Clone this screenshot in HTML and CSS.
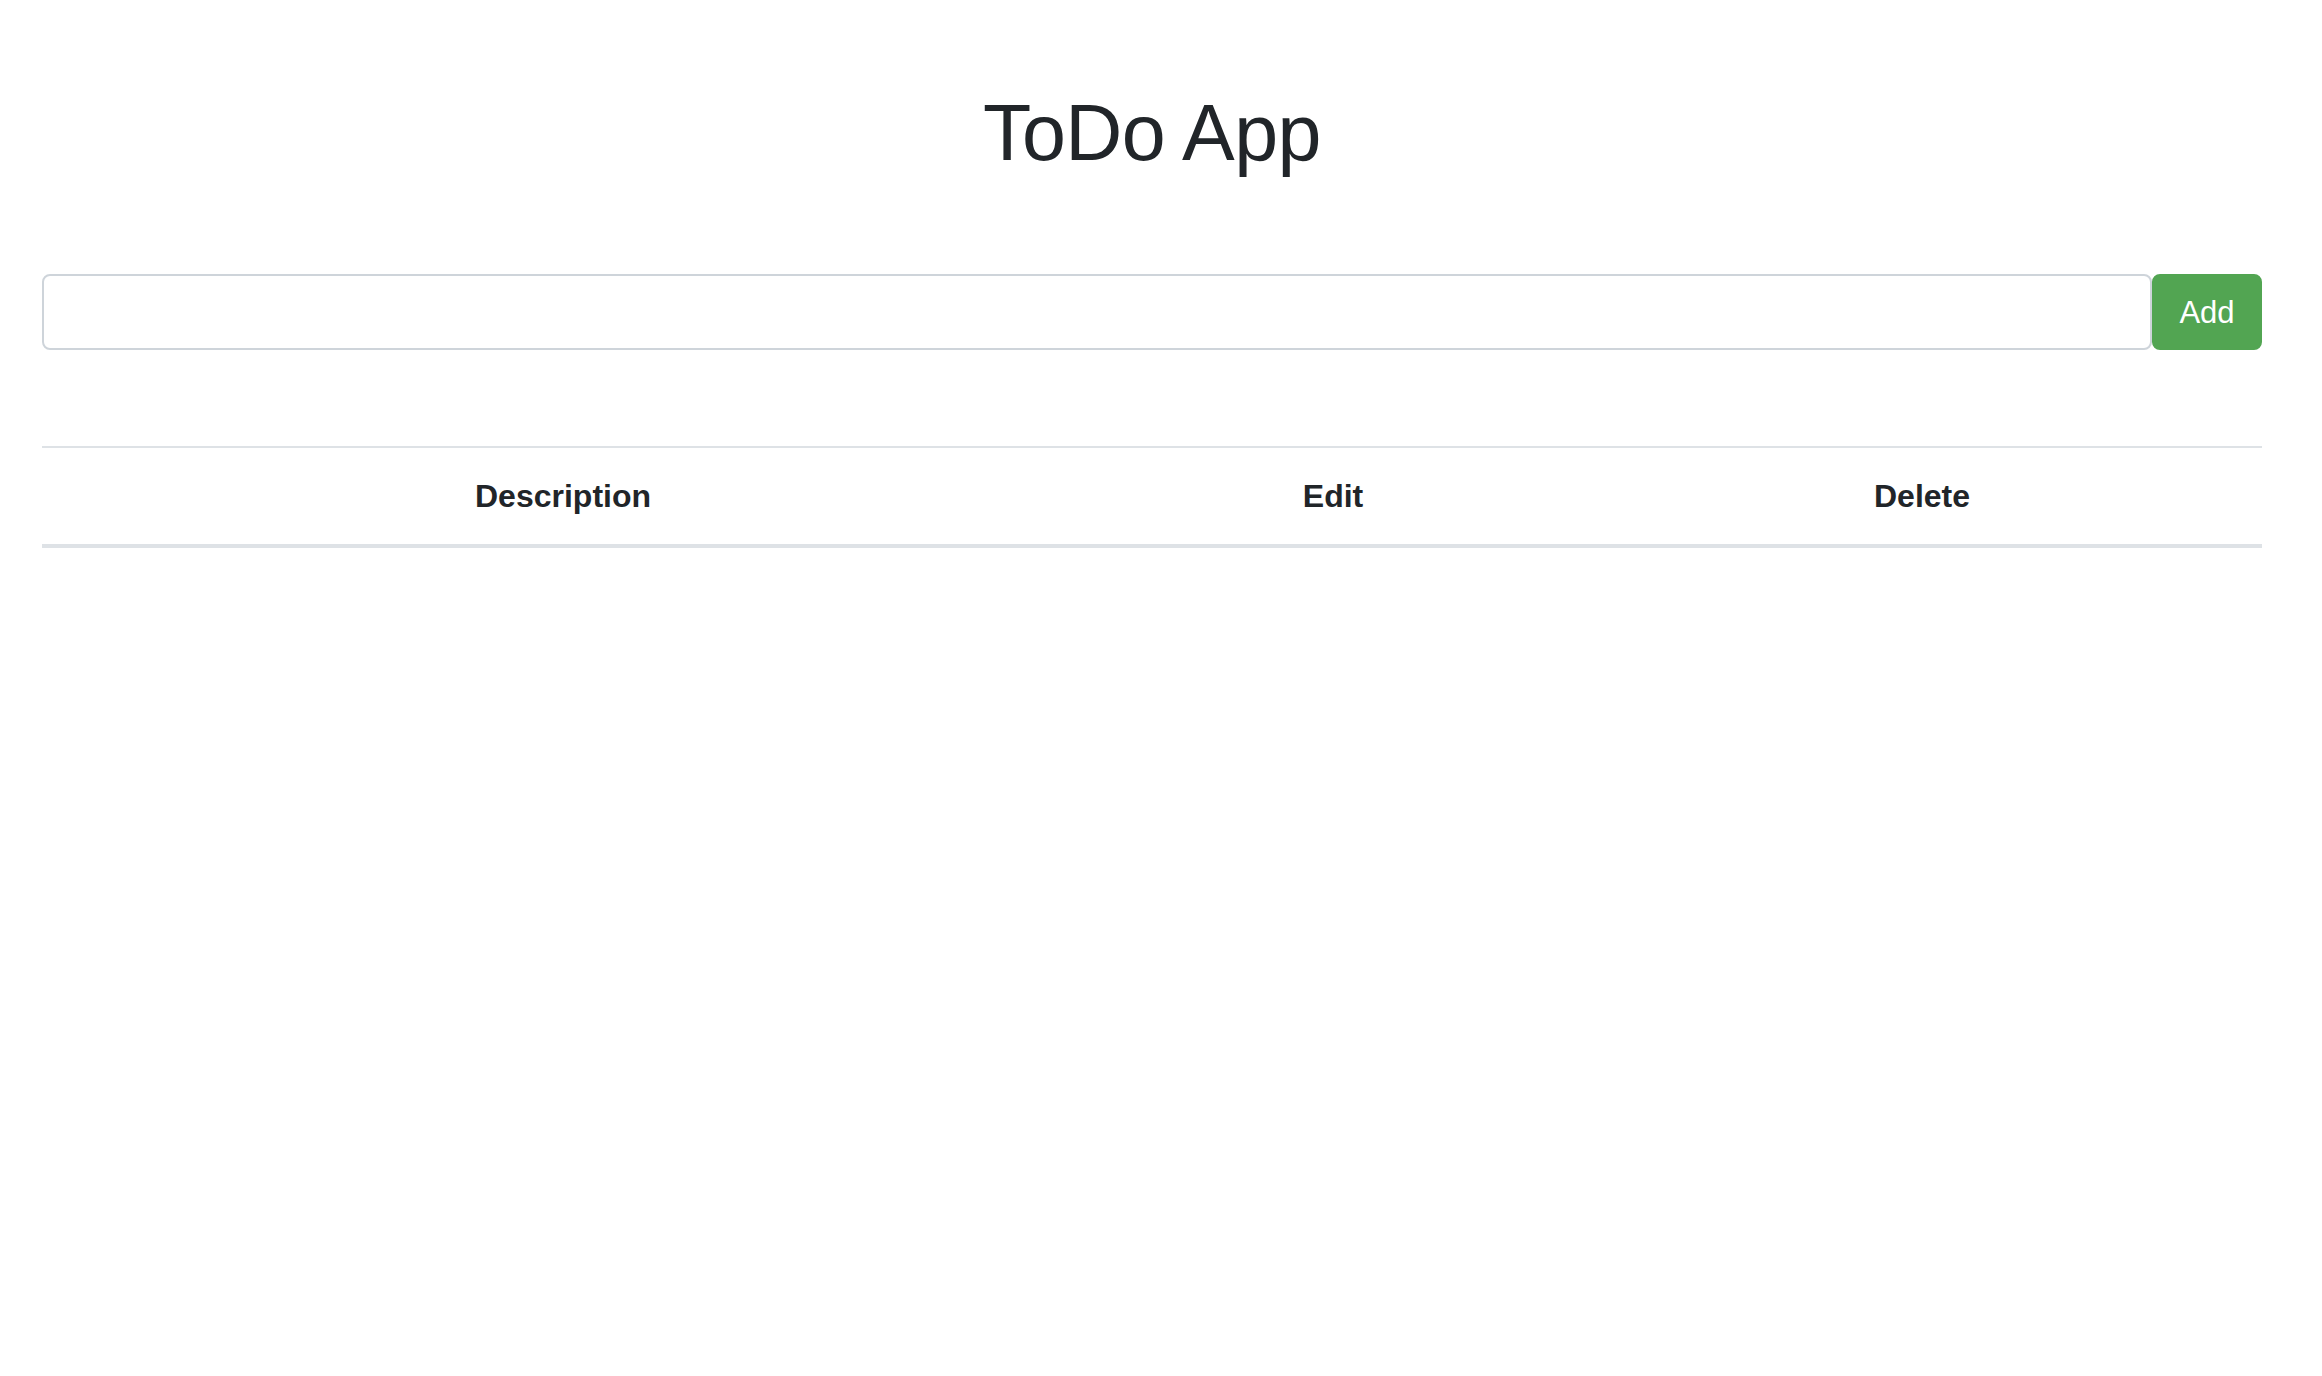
FILE: index.html
```html
<!DOCTYPE html>
<html lang="en">
<head>
<meta charset="utf-8">
<title>ToDo App</title>
<link rel="stylesheet" href="styles.css">
</head>
<body>
<div class="container">
  <h1 class="title">ToDo App</h1>
  <form class="add-form">
    <input class="add-input" type="text">
    <button class="add-btn" type="button">Add</button>
  </form>
  <table class="todo-table">
    <colgroup>
      <col class="col-desc">
      <col class="col-edit">
      <col class="col-del">
    </colgroup>
    <thead>
      <tr>
        <th>Description</th>
        <th>Edit</th>
        <th>Delete</th>
      </tr>
    </thead>
    <tbody></tbody>
  </table>
</div>
</body>
</html>
```
FILE: styles.css
```css
html, body {
  margin: 0;
  padding: 0;
  background: #ffffff;
}
body {
  font-family: "Liberation Sans", Arial, sans-serif;
  color: #212529;
  font-size: 32px;
  line-height: 48px;
}
.container {
  padding: 0 60px 0 42px;
}
.title {
  margin: 0;
  padding-top: 85px;
  font-size: 79px;
  line-height: 96px;
  font-weight: 400;
  text-align: center;
  letter-spacing: -0.6px;
  color: #212529;
}
.add-form {
  display: flex;
  margin: 93px 0 0 0;
}
.add-input {
  flex: 1;
  box-sizing: border-box;
  height: 76px;
  border: 2px solid #ced4da;
  border-radius: 8px;
  padding: 12px 24px;
  font-family: inherit;
  font-size: 32px;
  color: #495057;
  background: #fff;
  outline: none;
  margin: 0;
}
.add-btn {
  box-sizing: border-box;
  height: 76px;
  width: 110px;
  border: 2px solid #52a552;
  border-radius: 8px;
  background: #52a552;
  color: #ffffff;
  font-family: inherit;
  font-size: 31px;
  padding: 2px 0 0 0;
  margin: 0;
}
.todo-table {
  width: 100%;
  margin-top: 96px;
  border-collapse: collapse;
  table-layout: fixed;
}
.col-desc { width: 1042px; }
.col-edit { width: 498px; }
.col-del { width: 680px; }
.todo-table th {
  border-top: 2px solid #dee2e6;
  border-bottom: 4px solid #dee2e6;
  padding: 24px;
  font-size: 32px;
  line-height: 48px;
  font-weight: 700;
  text-align: center;
  color: #212529;
}
```
